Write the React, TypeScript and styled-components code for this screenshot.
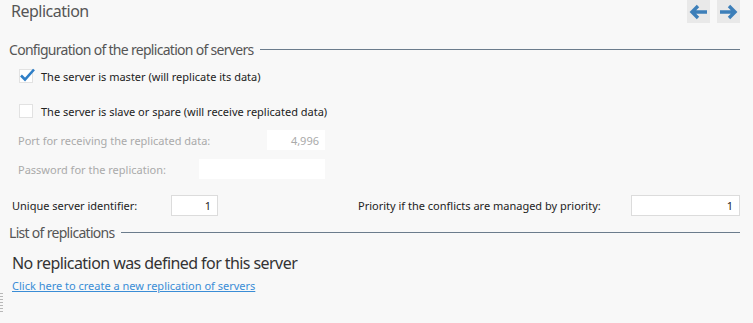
import styled, { createGlobalStyle } from "styled-components";

const Global = createGlobalStyle`
  html, body {
    margin: 0;
    background: #f8f8f8;
  }
  body {
    font-family: "Noto Sans", "Open Sans", sans-serif;
  }
`;

const Page = styled.div`
  position: relative;
  width: 753px;
  height: 323px;
  box-sizing: border-box;
  padding: 0 13px 0 9px;
  background: #f8f8f8;
  overflow: hidden;
`;

const Header = styled.div`
  display: flex;
  justify-content: space-between;
  align-items: flex-start;
  height: 38px;
`;

const Title = styled.h1`
  margin: 0 0 0 2px;
  font-size: 16px;
  font-weight: 400;
  letter-spacing: -0.5px;
  color: #555;
`;

const NavGroup = styled.div`
  display: flex;
  gap: 7px;
`;

const NavButton = styled.button`
  width: 23px;
  height: 23px;
  padding: 0;
  border: none;
  background: #e9e9e9;
  display: flex;
  align-items: center;
  justify-content: center;
  cursor: pointer;
`;

const Section = styled.div<{ $top?: number }>`
  display: flex;
  align-items: center;
  gap: 6px;
  margin-top: ${(p) => p.$top ?? 0}px;
  font-size: 14px;
  letter-spacing: -0.7px;
  color: #555;
  height: 22px;
`;

const Rule = styled.div`
  flex: 1;
  height: 1px;
  background: #6b7c8c;
`;

const CheckRow = styled.label<{ $top: number }>`
  display: flex;
  align-items: center;
  gap: 8px;
  height: 20px;
  margin: ${(p) => p.$top}px 0 0 10px;
  font-size: 11px;
  color: #222;
`;

const Box = styled.span`
  width: 12px;
  height: 12px;
  border: 1px solid #e2e2e2;
  background: #fff;
  position: relative;
`;

const Tick = styled.svg`
  position: absolute;
  left: -1px;
  top: -3px;
`;

const FieldRow = styled.div<{ $top: number }>`
  display: flex;
  align-items: center;
  justify-content: space-between;
  width: 307px;
  height: 20px;
  margin: ${(p) => p.$top}px 0 0 9px;
  font-size: 11px;
  color: #aaa;
`;

const Input = styled.div<{ $width: number; $border?: boolean; $muted?: boolean }>`
  width: ${(p) => p.$width}px;
  height: ${(p) => (p.$border ? 21 : 20)}px;
  box-sizing: border-box;
  background: #fff;
  border: ${(p) => (p.$border ? "1px solid #dcdcdc" : "none")};
  color: ${(p) => (p.$muted ? "#aaa" : "#222")};
  font-size: 11px;
  display: flex;
  align-items: center;
  justify-content: flex-end;
  padding-right: 6px;
`;

const IdRow = styled.div`
  display: flex;
  align-items: center;
  height: 21px;
  margin: 16px 0 0 3px;
  font-size: 11px;
  color: #222;
`;

const IdLabel = styled.span<{ $width: number }>`
  width: ${(p) => p.$width}px;
`;

const Spacer = styled.div`
  flex: 1;
`;

const Empty = styled.div`
  margin: 9px 0 0 3px;
  font-size: 16px;
  letter-spacing: -0.57px;
  color: #333;
`;

const Link = styled.a`
  display: block;
  margin: 4px 0 0 3px;
  font-size: 11px;
  color: #3a8dd6;
  text-decoration: underline;
  cursor: pointer;
`;

const Grip = styled.div`
  position: absolute;
  left: 0;
  top: 293px;
  width: 3px;
  height: 20px;
  background: repeating-linear-gradient(
    to bottom,
    #b8b8b8 0 1px,
    transparent 1px 3px
  );
`;

const Arrow = ({ dir }: { dir: "left" | "right" }) => (
  <svg width="21" height="16" viewBox="0 0 21 16">
    <path
      d={dir === "left" ? "M19 8H4 M10 2L4 8L10 14" : "M2 8H17 M11 2L17 8L11 14"}
      stroke="#3d7fb9"
      strokeWidth="3.4"
      fill="none"
      strokeLinecap="butt"
      strokeLinejoin="miter"
    />
  </svg>
);

export default function App() {
  return (
    <Page>
      <Global />
      <Header>
        <Title>Replication</Title>
        <NavGroup>
          <NavButton>
            <Arrow dir="left" />
          </NavButton>
          <NavButton>
            <Arrow dir="right" />
          </NavButton>
        </NavGroup>
      </Header>
      <Section>
        Configuration of the replication of servers
        <Rule />
      </Section>
      <CheckRow $top={6}>
        <Box>
          <Tick width="17" height="15" viewBox="0 0 17 15">
            <path d="M2 8.5L6 12.5L15 2.5" stroke="#2f7fc7" strokeWidth="2.6" fill="none" />
          </Tick>
        </Box>
        The server is master (will replicate its data)
      </CheckRow>
      <CheckRow $top={15}>
        <Box />
        The server is slave or spare (will receive replicated data)
      </CheckRow>
      <FieldRow $top={9}>
        Port for receiving the replicated data:
        <Input $width={58} $muted>
          4,996
        </Input>
      </FieldRow>
      <FieldRow $top={9}>
        Password for the replication:
        <Input $width={126} />
      </FieldRow>
      <IdRow>
        <IdLabel $width={159}>Unique server identifier:</IdLabel>
        <Input $width={47} $border>
          1
        </Input>
        <Spacer />
        <IdLabel $width={273}>Priority if the conflicts are managed by priority:</IdLabel>
        <Input $width={109} $border>
          1
        </Input>
      </IdRow>
      <Section $top={5}>
        List of replications
        <Rule />
      </Section>
      <Empty>No replication was defined for this server</Empty>
      <Link>Click here to create a new replication of servers</Link>
      <Grip />
    </Page>
  );
}
